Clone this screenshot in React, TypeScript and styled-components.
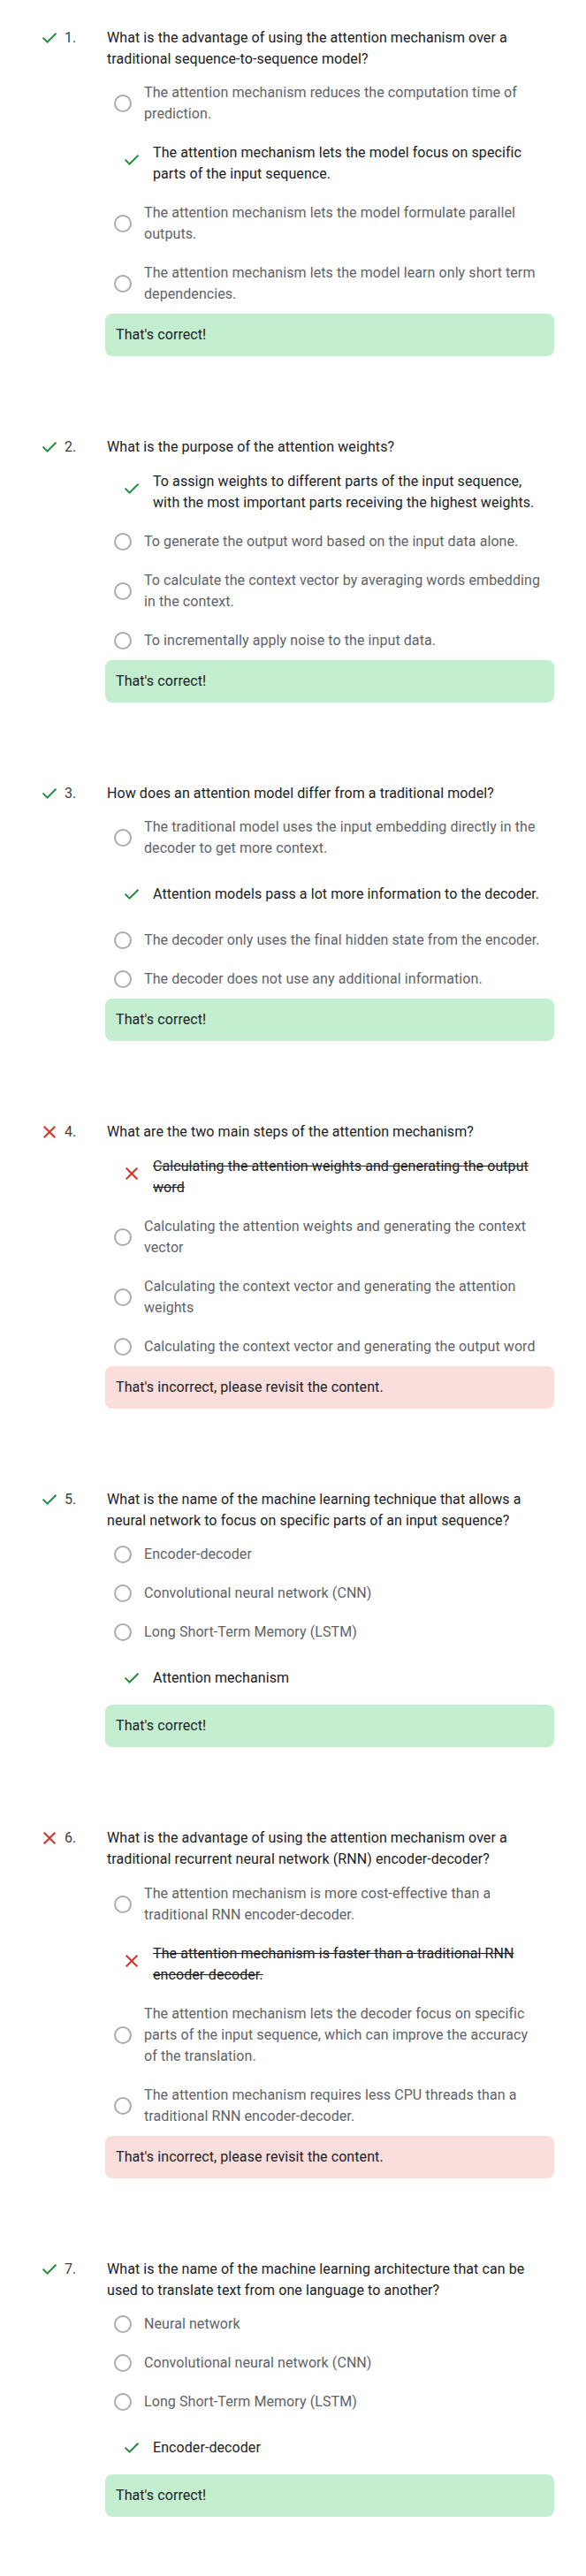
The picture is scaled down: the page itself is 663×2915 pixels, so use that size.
import React from "react";
import styled, { createGlobalStyle, css } from "styled-components";

const GlobalStyle = createGlobalStyle`
  html, body {
    margin: 0;
    padding: 0;
    background: #ffffff;
  }
  body {
    font-family: Roboto, "Noto Sans", "Liberation Sans", sans-serif;
    letter-spacing: 0.08px;
    -webkit-font-smoothing: antialiased;
  }
`;

type Kind = "plain" | "correct" | "wrong";

interface Option {
  text: string;
  kind?: Kind;
}

interface Question {
  text: string;
  correct: boolean;
  options: Option[];
}

const questions: Question[] = [
  {
    text: "What is the advantage of using the attention mechanism over a traditional sequence-to-sequence model?",
    correct: true,
    options: [
      { text: "The attention mechanism reduces the computation time of prediction." },
      { text: "The attention mechanism lets the model focus on specific parts of the input sequence.", kind: "correct" },
      { text: "The attention mechanism lets the model formulate parallel outputs." },
      { text: "The attention mechanism lets the model learn only short term dependencies." },
    ],
  },
  {
    text: "What is the purpose of the attention weights?",
    correct: true,
    options: [
      { text: "To assign weights to different parts of the input sequence, with the most important parts receiving the highest weights.", kind: "correct" },
      { text: "To generate the output word based on the input data alone." },
      { text: "To calculate the context vector by averaging words embedding in the context." },
      { text: "To incrementally apply noise to the input data." },
    ],
  },
  {
    text: "How does an attention model differ from a traditional model?",
    correct: true,
    options: [
      { text: "The traditional model uses the input embedding directly in the decoder to get more context." },
      { text: "Attention models pass a lot more information to the decoder.", kind: "correct" },
      { text: "The decoder only uses the final hidden state from the encoder." },
      { text: "The decoder does not use any additional information." },
    ],
  },
  {
    text: "What are the two main steps of the attention mechanism?",
    correct: false,
    options: [
      { text: "Calculating the attention weights and generating the output word", kind: "wrong" },
      { text: "Calculating the attention weights and generating the context vector" },
      { text: "Calculating the context vector and generating the attention weights" },
      { text: "Calculating the context vector and generating the output word" },
    ],
  },
  {
    text: "What is the name of the machine learning technique that allows a neural network to focus on specific parts of an input sequence?",
    correct: true,
    options: [
      { text: "Encoder-decoder" },
      { text: "Convolutional neural network (CNN)" },
      { text: "Long Short-Term Memory (LSTM)" },
      { text: "Attention mechanism", kind: "correct" },
    ],
  },
  {
    text: "What is the advantage of using the attention mechanism over a traditional recurrent neural network (RNN) encoder-decoder?",
    correct: false,
    options: [
      { text: "The attention mechanism is more cost-effective than a traditional RNN encoder-decoder." },
      { text: "The attention mechanism is faster than a traditional RNN encoder-decoder.", kind: "wrong" },
      { text: "The attention mechanism lets the decoder focus on specific parts of the input sequence, which can improve the accuracy of the translation." },
      { text: "The attention mechanism requires less CPU threads than a traditional RNN encoder-decoder." },
    ],
  },
  {
    text: "What is the name of the machine learning architecture that can be used to translate text from one language to another?",
    correct: true,
    options: [
      { text: "Neural network" },
      { text: "Convolutional neural network (CNN)" },
      { text: "Long Short-Term Memory (LSTM)" },
      { text: "Encoder-decoder", kind: "correct" },
    ],
  },
];

const GREEN = "#1e8e3e";
const RED = "#d93025";

const Page = styled.main`
  display: flex;
  flex-direction: column;
  gap: 91px;
  padding: 30.6px 36px 40px 44px;
`;

const Block = styled.section`
  display: flex;
  flex-direction: column;
`;

const Header = styled.div`
  display: grid;
  grid-template-columns: 24px 53px 1fr;
  align-items: start;
  margin-bottom: 4.5px;
`;

const StatusIcon = styled.span`
  display: flex;
  width: 24px;
  height: 24px;
`;

const Number = styled.span`
  padding-left: 5px;
  font-size: 16px;
  line-height: 24px;
  color: #3c4043;
`;

const QuestionText = styled.p`
  margin: 0;
  font-size: 16px;
  line-height: 24px;
  color: #202124;
`;

const Body = styled.div`
  margin-left: 75px;
  display: flex;
  flex-direction: column;
`;

const Row = styled.div<{ $selected: boolean }>`
  display: flex;
  align-items: center;
  padding: 10px 12px 10px 10px;
  gap: ${(p) => (p.$selected ? "12px" : "14px")};
`;

const Radio = styled.span`
  flex-shrink: 0;
  width: 20px;
  height: 20px;
  box-sizing: border-box;
  border: 2px solid #ababab;
  border-radius: 50%;
`;

const MarkBox = styled.span`
  flex-shrink: 0;
  align-self: flex-start;
  display: flex;
  align-items: center;
  width: 24px;
  height: 40px;
  margin-left: 8px;
`;

const OptionText = styled.span<{ $kind: Kind }>`
  font-size: 16px;
  line-height: 24px;
  color: #5f6368;
  ${(p) =>
    p.$kind !== "plain" &&
    css`
      color: #202124;
    `}
  ${(p) =>
    p.$kind === "wrong" &&
    css`
      text-decoration: line-through;
    `}
`;

const Feedback = styled.div<{ $ok: boolean }>`
  padding: 12px;
  border-radius: 8px;
  background: ${(p) => (p.$ok ? "#c4eed0" : "#f9dedc")};
  font-size: 16px;
  line-height: 24px;
  color: #202124;
`;

const CheckIcon = () => (
  <svg width="24" height="24" viewBox="0 -960 960 960" fill={GREEN}>
    <path d="M382-240 154-468l57-57 171 171 367-367 57 57-424 424Z" />
  </svg>
);

const CloseIcon = () => (
  <svg width="24" height="24" viewBox="0 -960 960 960" fill={RED}>
    <path d="m256-200-56-56 224-224-224-224 56-56 224 224 224-224 56 56-224 224 224 224-56 56-224-224-224 224Z" />
  </svg>
);

const OptionRow: React.FC<{ option: Option }> = ({ option }) => {
  const kind: Kind = option.kind ?? "plain";
  const selected = kind !== "plain";
  return (
    <Row $selected={selected}>
      {selected ? (
        <MarkBox>{kind === "correct" ? <CheckIcon /> : <CloseIcon />}</MarkBox>
      ) : (
        <Radio />
      )}
      <OptionText $kind={kind}>{option.text}</OptionText>
    </Row>
  );
};

export default function App() {
  return (
    <>
      <GlobalStyle />
      <Page>
        {questions.map((q, i) => (
          <Block key={i}>
            <Header>
              <StatusIcon>{q.correct ? <CheckIcon /> : <CloseIcon />}</StatusIcon>
              <Number>{i + 1}.</Number>
              <QuestionText>{q.text}</QuestionText>
            </Header>
            <Body>
              {q.options.map((o, j) => (
                <OptionRow key={j} option={o} />
              ))}
              <Feedback $ok={q.correct}>
                {q.correct ? "That's correct!" : "That's incorrect, please revisit the content."}
              </Feedback>
            </Body>
          </Block>
        ))}
      </Page>
    </>
  );
}
